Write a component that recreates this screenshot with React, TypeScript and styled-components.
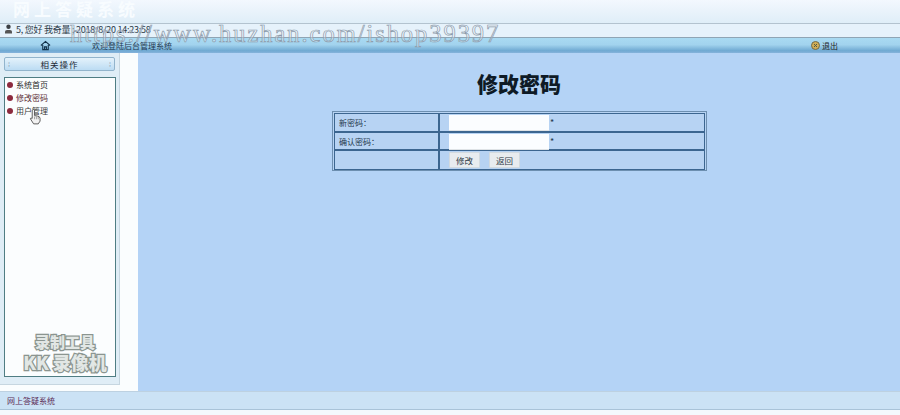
import React from "react";
import styled, { createGlobalStyle } from "styled-components";

const Global = createGlobalStyle`
  html, body { margin: 0; padding: 0; background: #f4f9fd; }
  body { font-family: "Liberation Sans", "Noto Sans CJK SC", sans-serif; }
`;
const Page = styled.div`
  position: relative; width: 900px; height: 415px; overflow: hidden;
  display: flex; flex-direction: column; background: #f6fafd;
`;
const Banner = styled.div`
  height: 23px; flex: none; overflow: hidden; padding-left: 13px; box-sizing: border-box;
  background: linear-gradient(#f3f8fe 0%, #eaf3fb 45%, #dfeef8 100%);
`;
const BannerTitle = styled.div`
  font: bold 17px/17px "Noto Sans CJK SC", sans-serif; color: #f8fcff; letter-spacing: 4px;
`;
const UserBar = styled.div`
  flex: none; display: flex; align-items: flex-start; gap: 3px; padding-left: 4px;
  border-top: 1px solid #b3c3cf; border-bottom: 1px solid #8fa5b5; box-sizing: content-box;
  background: #e6f2fb; font: 9px/11px "Noto Sans CJK SC", sans-serif; color: #2c3a48; height: 12px;
  padding-bottom: 1px; letter-spacing: -0.25px;
`;
const NavBar = styled.div`
  height: 15px; flex: none; display: flex; align-items: center; position: relative;
  background: linear-gradient(#a9daf2 0%, #a2d3ee 45%, #6fa9d2 85%, #86b3dc 100%);
  font: 8px/13px "Noto Sans CJK SC", sans-serif; color: #1f3850;
`;
const HomeIcon = styled.svg`
  width: 11px; height: 11px; margin-left: 40px; flex: none;
`;
const Welcome = styled.span`
  margin-left: 41px; flex: 1;
`;
const Exit = styled.span`
  display: flex; align-items: center; gap: 2px; margin-right: 62px; color: #222;
`;
const Body = styled.div`
  flex: 1; display: flex; min-height: 0;
`;
const Side = styled.aside`
  width: 138px; flex: none; background: #fafdfe; display: flex;
`;
const SideInner = styled.div`
  width: 120px; height: 332px; flex: none; background: #dfedf6; padding: 4px 0 0 3px;
  box-sizing: border-box; border-right: 1px solid #c6d6e0; border-bottom: 1px solid #c6d6e0;
  display: flex; flex-direction: column; gap: 6px;
`;
const SideHead = styled.div`
  width: 111px; height: 14px; margin-left: 1px; display: flex; align-items: center; justify-content: space-between;
  padding: 0 3px; box-sizing: border-box; border: 1px solid #92b4cc; border-radius: 2px;
  background: linear-gradient(#e4f2fb, #bcdcf3); color: #1d2a36;
  font: 8.5px/12px "Noto Sans CJK SC", sans-serif;
`;
const Grip = styled.span`
  font-size: 7px; color: #7f9db3; letter-spacing: 0;
`;
const HeadLabel = styled.span`
  letter-spacing: 1px;
`;
const Tree = styled.div`
  position: relative; width: 112px; flex: 1; margin-left: 1px; margin-bottom: 7px; background: #fbfdfe;
  border: 1px solid #4f7d83; box-sizing: border-box; padding: 0 0 0 2px;
`;
const TreeRow = styled.div<{ $tone: string }>`
  height: 13px; display: flex; align-items: center; gap: 3px; margin-top: 0;
  font: 8px/13px "Noto Sans CJK SC", sans-serif; color: ${(p) => p.$tone};
`;
const Bullet = styled.i`
  width: 6px; height: 6px; border-radius: 50%; background: #8c2a3e; display: block; flex: none;
`;
const Cursor = styled.svg`
  position: absolute; left: 24px; top: 30px; width: 12px; height: 17px;
`;
const Mark = styled.div`
  position: absolute; left: 10px; bottom: 3px; width: 100px; text-align: center;
  font: 900 15px/17px "Noto Sans CJK SC", sans-serif; color: #e2e7e5;
  -webkit-text-stroke: 2.5px #8b9590; paint-order: stroke fill;
`;
const MarkLine = styled.div<{ $size: number }>`
  font-size: ${(p) => p.$size}px; white-space: nowrap; line-height: ${(p) => p.$size + 4}px;
`;
const Main = styled.main`
  flex: 1; background: #b4d3f6; display: flex; flex-direction: column; align-items: center;
  box-sizing: border-box;
`;
const Title = styled.h1`
  margin: 15px 0 0 0; height: 43px; font: 900 21px/30px "Noto Sans CJK SC", sans-serif; color: #0e1a26;
`;
const Form = styled.div`
  width: 375px; height: 60px; box-sizing: border-box; margin-left: 1px; padding: 1px;
  border: 1px solid #6d8fb0; display: grid; grid-template-columns: 105px 1fr;
  grid-template-rows: 19px 18px 20px; background: #b7d3f3;
`;
const Cell = styled.div`
  border: 1px solid #3c6690; box-sizing: border-box; display: flex; align-items: center; gap: 1px;
  padding-left: 4px; font: 8px/13px "Noto Sans CJK SC", sans-serif; color: #24384c;
`;
const FieldCell = styled(Cell)`
  padding-left: 9px;
`;
const Input = styled.input`
  width: 100px; height: 15px; box-sizing: border-box; border: 0; padding: 0; background: #fbfdff;
  box-shadow: 0 1px 0 #dfe3e6; outline: none;
`;
const Star = styled.span`
  color: #24384c; font-size: 9px; line-height: 9px;
`;
const Btn = styled.button`
  width: 31px; height: 16px; padding: 0; border: 1px solid #d3dadf; background: #e8ecef; margin-right: 8px;
  font: 8.5px/13px "Noto Sans CJK SC", sans-serif; color: #2e3a46; border-radius: 1px;
`;
const Footer = styled.footer`
  height: 19px; flex: none; display: flex; align-items: center; padding-left: 7px;
  background: #cbe2f5; border-top: 1px solid #bdd1e1; border-bottom: 1px solid #a9c3d8; box-sizing: border-box;
  font: 8px/13px "Noto Sans CJK SC", sans-serif; color: #5c2b55;
`;
const Strip = styled.div`
  height: 5px; flex: none; background: #f4f9fd;
`;
const Stamp = styled.div`
  position: absolute; left: 70px; top: 19px; white-space: nowrap;
  font: 24.5px/30px "Liberation Serif", serif; letter-spacing: 1.95px; color: rgba(255,255,255,.35);
  -webkit-text-stroke: 0.7px #8d9bab; pointer-events: none;
`;

export default function App() {
  return (
    <Page>
      <Global />
      <Banner><BannerTitle>网上答疑系统</BannerTitle></Banner>
      <UserBar>
        <svg width="9" height="10" viewBox="0 0 9 10"><circle cx="4.5" cy="2.8" r="2.2" fill="#3b3f44" /><path d="M1 9.5V7.5Q1 6 3 6H6Q8 6 8 7.5V9.5Z" fill="#555" /></svg>
        <span>5, 您好 我奇量 ; 2018/8/20 14:23:58</span>
      </UserBar>
      <NavBar>
        <HomeIcon viewBox="0 0 12 12"><path d="M1 6 6 1.5 11 6M3 5.5V10.5H9V5.5M5 10.5V7.5H7V10.5" fill="none" stroke="#12324a" strokeWidth="1.2" /></HomeIcon>
        <Welcome>欢迎登陆后台管理系统</Welcome>
        <Exit>
          <svg width="9" height="9" viewBox="0 0 9 9"><circle cx="4.5" cy="4.5" r="4" fill="#d2ad55" stroke="#6f6a4c" /><path d="M3 3 6 6M6 3 3 6" stroke="#4f5a4a" /></svg>
          退出
        </Exit>
      </NavBar>
      <Body>
        <Side>
          <SideInner>
            <SideHead><Grip>⁞</Grip><HeadLabel>相关操作</HeadLabel><Grip>⁞</Grip></SideHead>
            <Tree>
              <TreeRow $tone="#2a2a2a"><Bullet />系统首页</TreeRow>
              <TreeRow $tone="#5a2c34"><Bullet />修改密码</TreeRow>
              <TreeRow $tone="#3a3a3a"><Bullet />用户管理</TreeRow>
              <Cursor viewBox="0 0 13 18"><path d="M4 1.5Q5.5.5 6 2V8L9 8.5Q12 9 12 11V14L10 17H5L1.5 11.5Q1.5 10 3.5 11V2Z" fill="#f2f2f2" stroke="#555" strokeWidth="1" /><path d="M6 9V12M8 9V12M10 9.5V12" stroke="#777" strokeWidth=".7" /></Cursor>
              <Mark>
                <MarkLine $size={15}>录制工具</MarkLine>
                <MarkLine $size={18}>KK 录像机</MarkLine>
              </Mark>
            </Tree>
          </SideInner>
        </Side>
        <Main>
          <Title>修改密码</Title>
          <Form>
            <Cell>新密码：</Cell>
            <FieldCell><Input type="text" /><Star>*</Star></FieldCell>
            <Cell>确认密码：</Cell>
            <FieldCell><Input type="text" /><Star>*</Star></FieldCell>
            <Cell />
            <FieldCell><Btn>修改</Btn><Btn>返回</Btn></FieldCell>
          </Form>
        </Main>
      </Body>
      <Footer>网上答疑系统</Footer>
      <Strip />
      <Stamp>https://www.huzhan.com/ishop39397</Stamp>
    </Page>
  );
}
